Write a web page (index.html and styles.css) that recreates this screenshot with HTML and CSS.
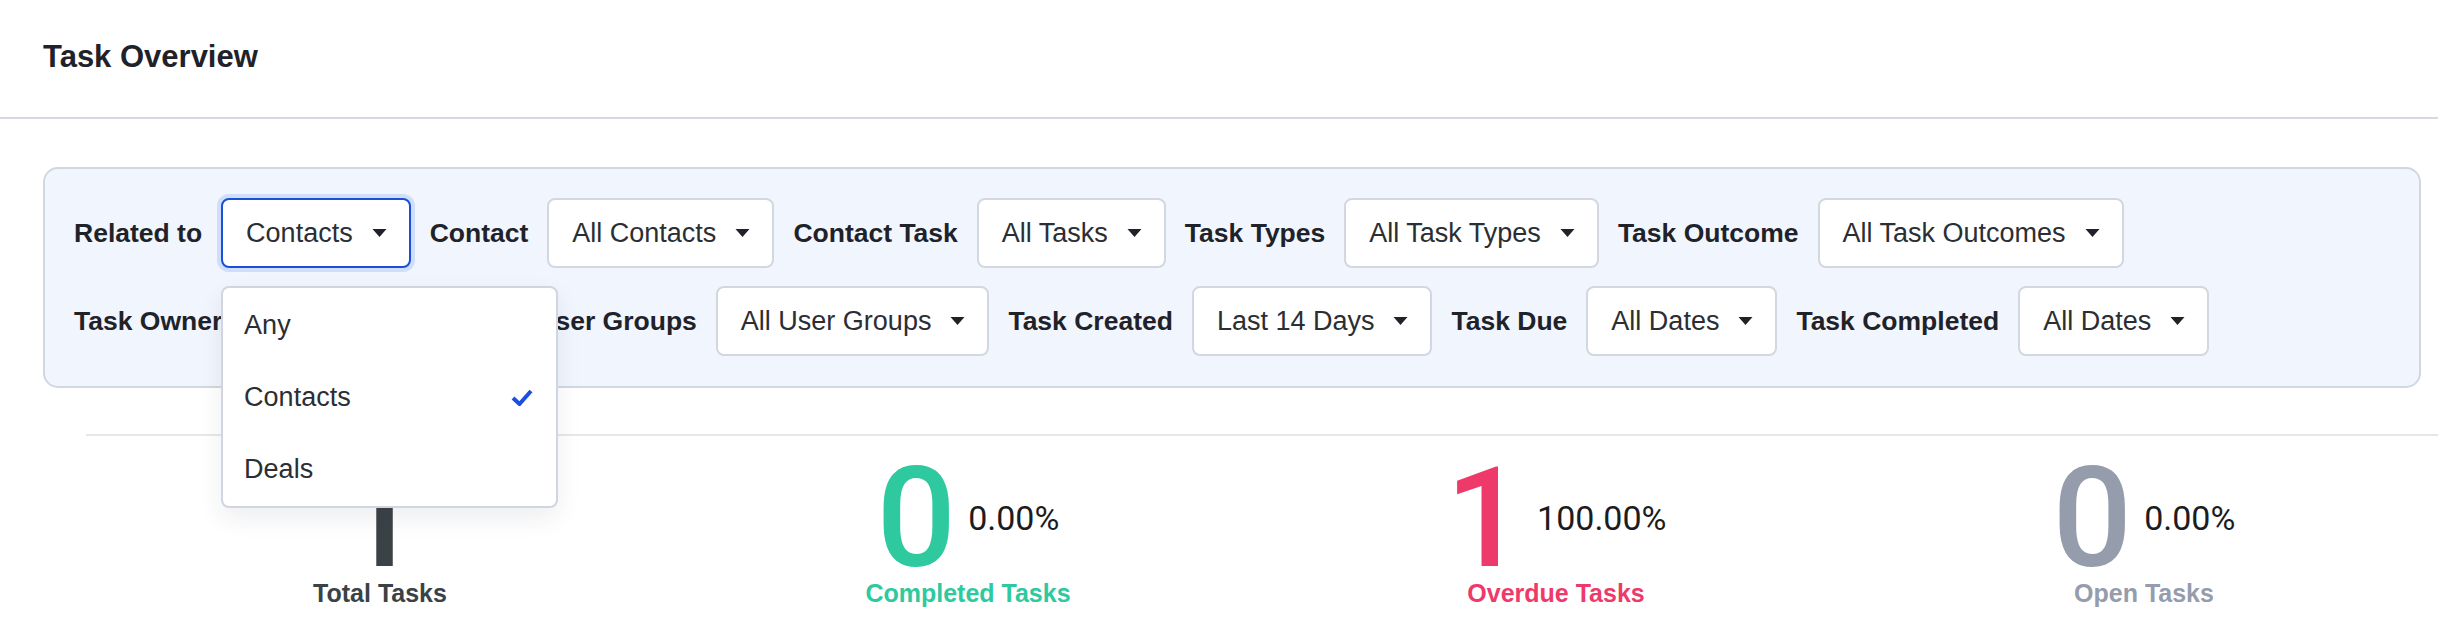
FILE: index.html
```html
<!DOCTYPE html>
<html lang="en">

<head>
    <meta charset="UTF-8">
    <meta name="viewport" content="width=device-width, initial-scale=1.0">
    <title>Task Overview</title>
    <link rel="stylesheet" href="styles.css">
</head>

<body>
    <div class="page-header">
        <h1>Task Overview</h1>
    </div>

    <div class="filters">
        <div class="filter-row">
            <span class="filter-label">Related to</span>
            <div class="select-wrap">
                <button class="select is-open">Contacts
                    <svg class="caret" viewBox="0 0 14 8"><path d="M0 0h14L7 8z" /></svg>
                </button>
                <ul class="menu">
                    <li>Any</li>
                    <li>Contacts
                        <svg class="check" viewBox="0 0 22 17"><path d="M2 9l6.5 6L20 2" /></svg>
                    </li>
                    <li>Deals</li>
                </ul>
            </div>
            <span class="filter-label">Contact</span>
            <button class="select">All Contacts
                <svg class="caret" viewBox="0 0 14 8"><path d="M0 0h14L7 8z" /></svg>
            </button>
            <span class="filter-label">Contact Task</span>
            <button class="select">All Tasks
                <svg class="caret" viewBox="0 0 14 8"><path d="M0 0h14L7 8z" /></svg>
            </button>
            <span class="filter-label">Task Types</span>
            <button class="select">All Task Types
                <svg class="caret" viewBox="0 0 14 8"><path d="M0 0h14L7 8z" /></svg>
            </button>
            <span class="filter-label">Task Outcome</span>
            <button class="select">All Task Outcomes
                <svg class="caret" viewBox="0 0 14 8"><path d="M0 0h14L7 8z" /></svg>
            </button>
        </div>

        <div class="filter-row">
            <span class="filter-label">Task Owner</span>
            <button class="select">All Task Owners
                <svg class="caret" viewBox="0 0 14 8"><path d="M0 0h14L7 8z" /></svg>
            </button>
            <span class="filter-label">User Groups</span>
            <button class="select">All User Groups
                <svg class="caret" viewBox="0 0 14 8"><path d="M0 0h14L7 8z" /></svg>
            </button>
            <span class="filter-label">Task Created</span>
            <button class="select">Last 14 Days
                <svg class="caret" viewBox="0 0 14 8"><path d="M0 0h14L7 8z" /></svg>
            </button>
            <span class="filter-label">Task Due</span>
            <button class="select">All Dates
                <svg class="caret" viewBox="0 0 14 8"><path d="M0 0h14L7 8z" /></svg>
            </button>
            <span class="filter-label">Task Completed</span>
            <button class="select">All Dates
                <svg class="caret" viewBox="0 0 14 8"><path d="M0 0h14L7 8z" /></svg>
            </button>
        </div>
    </div>

    <div class="stats">
        <div class="stat stat-total">
            <div class="stat-figure">
                <span class="stat-num">1</span>
            </div>
            <div class="stat-label">Total Tasks</div>
        </div>
        <div class="stat stat-completed">
            <div class="stat-figure">
                <span class="stat-num">0</span>
                <span class="stat-pct">0.00%</span>
            </div>
            <div class="stat-label">Completed Tasks</div>
        </div>
        <div class="stat stat-overdue">
            <div class="stat-figure">
                <span class="stat-num">1</span>
                <span class="stat-pct">100.00%</span>
            </div>
            <div class="stat-label">Overdue Tasks</div>
        </div>
        <div class="stat stat-open">
            <div class="stat-figure">
                <span class="stat-num">0</span>
                <span class="stat-pct">0.00%</span>
            </div>
            <div class="stat-label">Open Tasks</div>
        </div>
    </div>
</body>

</html>
```

FILE: styles.css
```css
* {
    margin: 0;
    padding: 0;
    box-sizing: border-box;
}

body,
html {
    width: 100%;
    height: 100%;
    background-color: #FFF;
    font-family: "Liberation Sans", Arial, sans-serif;
    color: #1f2329;
    overflow: hidden;
}

.page-header {
    display: flex;
    align-items: center;
    height: 119px;
    padding: 0 43px 4px;
    border-bottom: 2px solid #d6d6e4;
}

.page-header h1 {
    font-size: 31px;
    font-weight: bold;
}

.filters {
    display: flex;
    flex-direction: column;
    gap: 18px;
    margin: 48px 17px 0 43px;
    padding: 29px 29px 30px;
    background-color: #f1f5fd;
    border: 2px solid #d3d7df;
    border-radius: 15px;
}

.filter-row {
    display: flex;
    align-items: center;
    gap: 19px;
}

.filter-label {
    font-size: 26.5px;
    font-weight: bold;
    white-space: nowrap;
}

.select-wrap {
    position: relative;
}

.select {
    display: flex;
    align-items: center;
    gap: 19px;
    height: 70px;
    padding: 0 22px 0 23px;
    font-family: inherit;
    font-size: 27px;
    color: #2b2e33;
    white-space: nowrap;
    background-color: #FFF;
    border: 2px solid #d3d7df;
    border-radius: 8px;
    cursor: pointer;
}

.select.is-open {
    border-color: #1a4fd8;
    box-shadow: 0 0 0 4px #d0defb;
}

.caret {
    width: 15px;
    height: 8px;
    fill: #1f2329;
}

.menu {
    position: absolute;
    top: calc(100% + 18px);
    left: 0;
    z-index: 2;
    width: 337px;
    padding: 1px 0;
    list-style: none;
    background-color: #FFF;
    border: 2px solid #d3d4e2;
    border-radius: 8px;
    box-shadow: 0 10px 24px rgba(30, 35, 60, 0.08);
}

.menu li {
    display: flex;
    align-items: center;
    justify-content: space-between;
    height: 72px;
    padding: 0 23px 0 21px;
    font-size: 27px;
    color: #2b2e33;
}

.check {
    width: 22px;
    height: 17px;
    fill: none;
    stroke: #1a4fe0;
    stroke-width: 4;
}

.stats {
    display: grid;
    grid-template-columns: repeat(4, 1fr);
    margin: 46px 0 0 86px;
    padding-top: 22px;
    border-top: 2px solid #e7e7e9;
}

.stat {
    display: flex;
    flex-direction: column;
    align-items: center;
}

.stat-figure {
    display: flex;
    align-items: center;
    gap: 12px;
}

.stat-num {
    font-family: Roboto, sans-serif;
    font-size: 140px;
    font-weight: 500;
    line-height: 120px;
}

.stat-pct {
    font-family: Roboto, sans-serif;
    font-size: 34px;
    color: #1c1c1e;
}

.stat-label {
    margin-top: 1px;
    font-size: 25px;
    font-weight: bold;
}

.stat-total {
    color: #3b4246;
}

.stat-completed {
    color: #2ec99e;
}

.stat-overdue {
    color: #ee3a6a;
}

.stat-open {
    color: #959cab;
}
```
